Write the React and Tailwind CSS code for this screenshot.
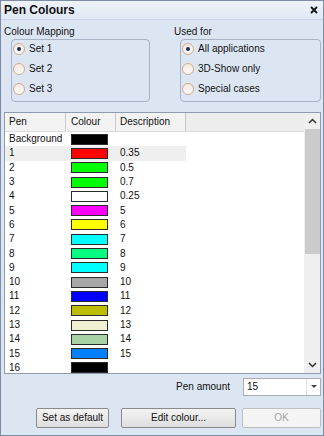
import React from "react";

const rows = [
  { pen: "Background", color: "#000000", desc: "" },
  { pen: "1", color: "#ff0000", desc: "0.35", sel: true },
  { pen: "2", color: "#00ff00", desc: "0.5" },
  { pen: "3", color: "#00ff00", desc: "0.7" },
  { pen: "4", color: "#ffffff", desc: "0.25" },
  { pen: "5", color: "#ff00ff", desc: "5" },
  { pen: "6", color: "#ffff00", desc: "6" },
  { pen: "7", color: "#00ffff", desc: "7" },
  { pen: "8", color: "#00ff80", desc: "8" },
  { pen: "9", color: "#00ffff", desc: "9" },
  { pen: "10", color: "#a8a8a8", desc: "10" },
  { pen: "11", color: "#0000ff", desc: "11" },
  { pen: "12", color: "#bdbd00", desc: "12" },
  { pen: "13", color: "#f0f0d2", desc: "13" },
  { pen: "14", color: "#a6d2a6", desc: "14" },
  { pen: "15", color: "#0080ff", desc: "15" },
  { pen: "16", color: "#000000", desc: "" },
];

function Radio({ checked, label }) {
  return (
    <div className="flex items-center h-[20px]">
      <div className="w-[12px] h-[12px] rounded-full border border-[#d2aa8c] bg-gradient-to-b from-[#f3e9e1] to-[#fdfbf9] flex items-center justify-center">
        {checked && <div className="w-[4px] h-[4px] rounded-full bg-[#1c2c5c]" />}
      </div>
      <span className="ml-[4px]">{label}</span>
    </div>
  );
}

function Chevron({ up }) {
  return (
    <svg width="9" height="6" viewBox="0 0 9 6">
      <path
        d={up ? "M1 5 L4.5 1.5 L8 5" : "M1 1 L4.5 4.5 L8 1"}
        fill="none"
        stroke="#333"
        strokeWidth="1.5"
      />
    </svg>
  );
}

export default function App() {
  return (
    <div
      className="w-[324px] h-[436px] border border-[#7d8ca3] bg-[#dce6f3] flex flex-col text-[#111] text-[10px] leading-none overflow-hidden"
      style={{ fontFamily: '"Liberation Sans", Arial, sans-serif' }}
    >
      {/* Title bar */}
      <div className="h-[19px] shrink-0 flex items-center justify-between pl-[3px] pr-[5px] bg-gradient-to-b from-[#eef3fa] to-[#dfe8f4] border-b border-[#c9d5e6]">
        <span className="font-bold text-[12px]">Pen Colours</span>
        <svg width="8" height="8" viewBox="0 0 8 8">
          <path d="M1 1 L7 7 M7 1 L1 7" stroke="#111" strokeWidth="1.8" />
        </svg>
      </div>

      {/* Groups */}
      <div className="flex pt-[5px] pl-[3px] pr-[2px]">
        <div className="w-[170px] shrink-0 flex flex-col">
          <div className="h-[13px] flex items-center">Colour Mapping</div>
          <div className="mt-[1px] ml-[7px] w-[139px] h-[63px] border border-[#a6b4c6] rounded-[4px] pl-[1px] flex flex-col">
            <div className="-mt-[1px]">
              <Radio checked label="Set 1" />
              <Radio label="Set 2" />
              <Radio label="Set 3" />
            </div>
          </div>
        </div>
        <div className="flex-1 flex flex-col">
          <div className="h-[13px] flex items-center">Used for</div>
          <div className="mt-[1px] ml-[6px] h-[63px] border border-[#a6b4c6] rounded-[4px] pl-[1px] flex flex-col">
            <div className="-mt-[1px]">
              <Radio checked label="All applications" />
              <Radio label="3D-Show only" />
              <Radio label="Special cases" />
            </div>
          </div>
        </div>
      </div>

      {/* Table */}
      <div className="mt-[10px] ml-[3px] mr-[2px] h-[262px] shrink-0 border border-[#8e9bb0] bg-white flex overflow-hidden">
        <div className="flex-1 flex flex-col overflow-hidden">
          <div className="h-[19px] shrink-0 flex bg-[#ededed] border-b border-[#dcdcdc]">
            <div className="w-[61px] border-r border-[#c8c8c8] flex items-center pl-[4px] bg-[#f3f3f3]">Pen</div>
            <div className="w-[50px] border-r border-[#c8c8c8] flex items-center pl-[5px] bg-[#f3f3f3]">Colour</div>
            <div className="w-[70px] border-r border-[#c8c8c8] flex items-center pl-[4px] bg-[#f3f3f3]">Description</div>
          </div>
          <div className="flex flex-col">
            {rows.map((r) => (
              <div
                key={r.pen}
                className={`h-[14.3px] shrink-0 flex items-center w-[181px] ${r.sel ? "bg-[#efefef]" : ""}`}
              >
                <div className="w-[61px] pl-[4px]">{r.pen}</div>
                <div className="w-[50px] pl-[5px] flex items-center">
                  <div
                    className="w-[37px] h-[11px] border border-[#2a2a2a]"
                    style={{ backgroundColor: r.color }}
                  />
                </div>
                <div className="pl-[4px]">{r.desc}</div>
              </div>
            ))}
          </div>
        </div>
        {/* Scrollbar */}
        <div className="w-[16px] shrink-0 bg-[#efefef] flex flex-col items-center">
          <div className="h-[16px] flex items-center justify-center">
            <Chevron up />
          </div>
          <div className="w-[15px] h-[125px] bg-[#cbcbcb]" />
          <div className="flex-1" />
          <div className="h-[16px] flex items-center justify-center">
            <Chevron />
          </div>
        </div>
      </div>

      {/* Pen amount */}
      <div className="mt-[4px] mr-[2px] flex items-center justify-end h-[18px]">
        <span className="mr-[13px]">Pen amount</span>
        <div className="w-[78px] h-[18px] border border-[#abadb3] bg-white flex">
          <div className="flex-1 flex items-center pl-[3px]">15</div>
          <div className="w-[14px] border-l border-[#e0e0e0] flex items-center justify-center">
            <svg width="6" height="4" viewBox="0 0 6 4">
              <path d="M0 0 L6 0 L3 3 Z" fill="#444" />
            </svg>
          </div>
        </div>
      </div>

      {/* Buttons */}
      <div className="mt-[12px] mr-[2px] flex justify-end h-[20px]">
        <button className="w-[73px] h-[20px] border border-[#8a8a8a] rounded-[2px] bg-gradient-to-b from-[#f4f4f4] to-[#dedede] text-[#111]">
          Set as default
        </button>
        <button className="ml-[12px] w-[115px] h-[20px] border border-[#8a8a8a] rounded-[2px] bg-gradient-to-b from-[#f4f4f4] to-[#dedede] text-[#111]">
          Edit colour...
        </button>
        <button className="ml-[6px] w-[79px] h-[20px] border border-[#bfbfbf] rounded-[2px] bg-[#f4f4f4] text-[#a3a3a3]">
          OK
        </button>
      </div>
    </div>
  );
}
